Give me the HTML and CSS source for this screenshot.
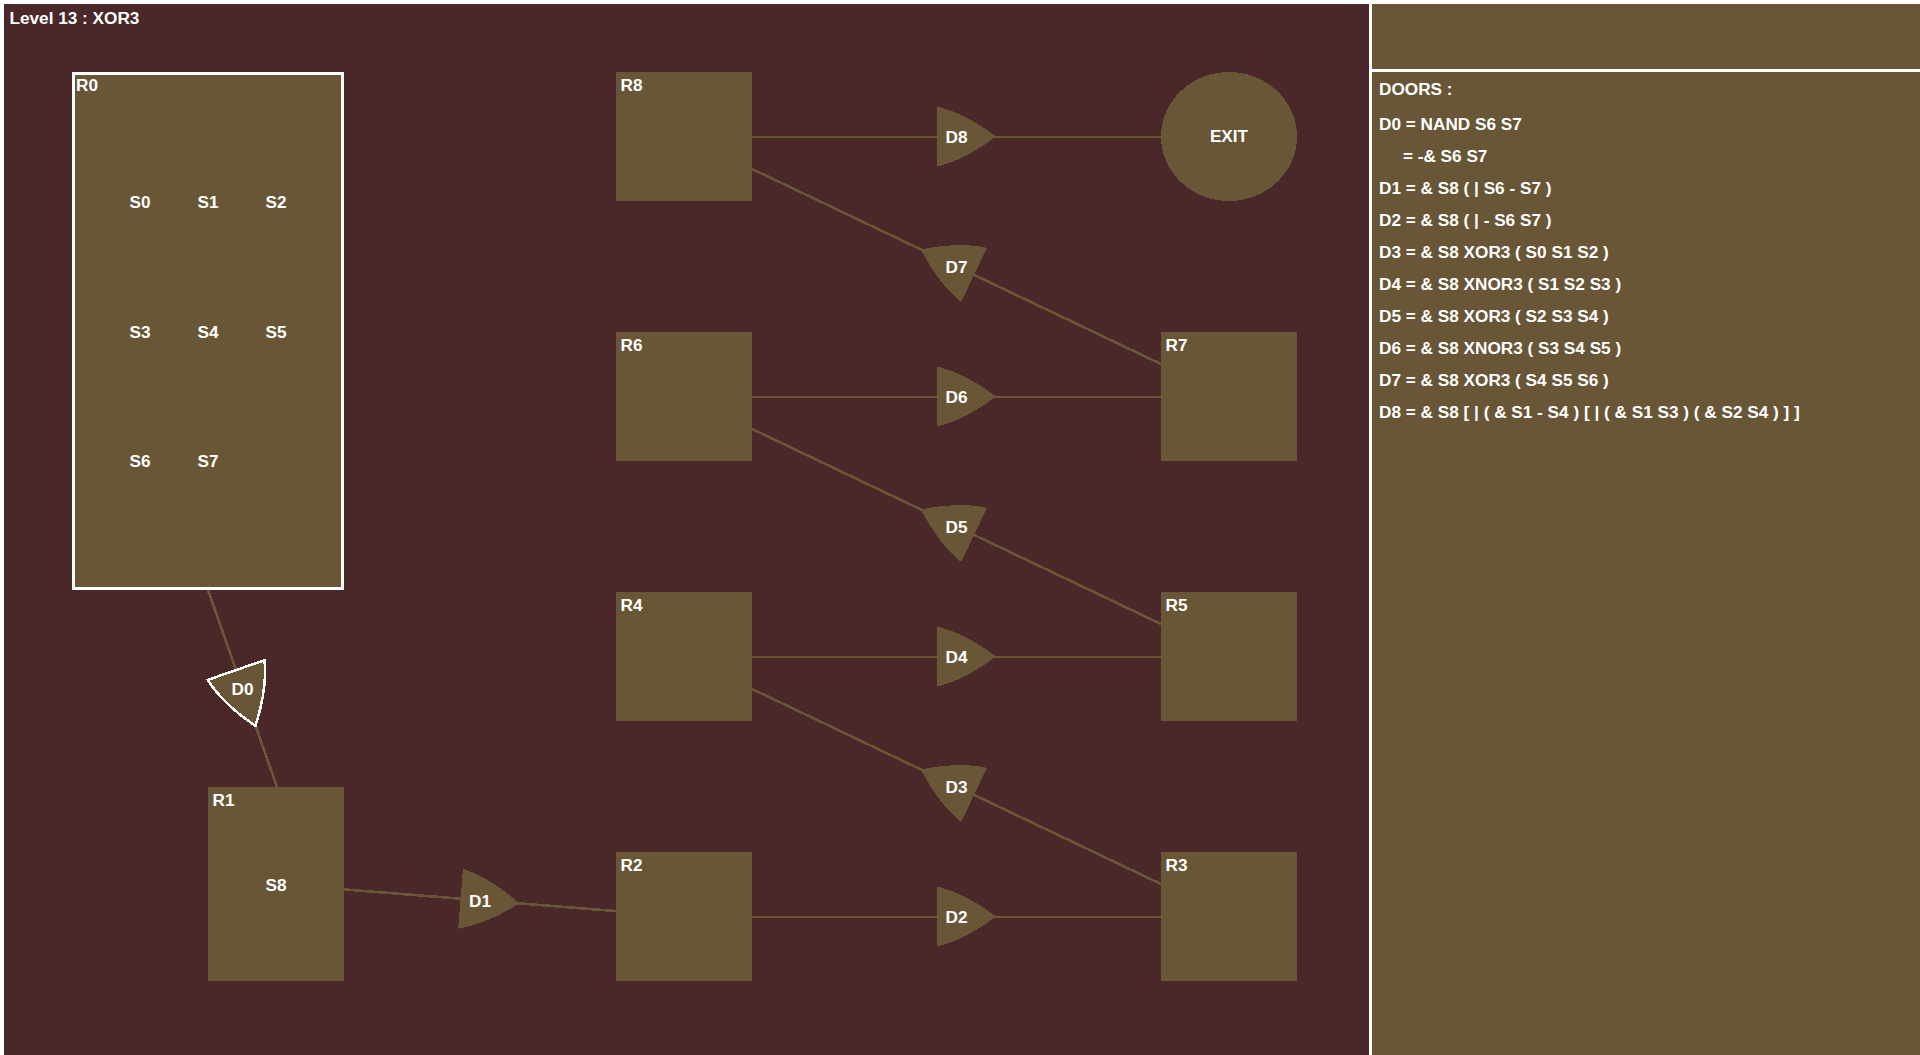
FILE: index.html
```html
<!DOCTYPE html>
<html lang="en">
<head>
    <meta charset="UTF-8">
    <title>Level 13 : XOR3</title>
    <link rel="stylesheet" href="styles.css">
</head>
<body>
    <div class="game">
        <svg class="board" viewBox="4 4 1365 1051" width="1365" height="1051" xmlns="http://www.w3.org/2000/svg">
            <defs>
                <path id="door" d="M-19.5,-30 Q7.5,-24 39.5,0 Q7.5,24 -19.5,30 Z"/>
            </defs>

            <text x="9.5" y="24">Level 13 : XOR3</text>

            <!-- corridors -->
            <g class="links">
                <line x1="208" y1="590" x2="277" y2="787"/>
                <line x1="276" y1="884" x2="684" y2="916.5"/>
                <line x1="684" y1="137" x2="1229" y2="137"/>
                <line x1="684" y1="136.5" x2="1229" y2="396.5"/>
                <line x1="684" y1="397" x2="1229" y2="397"/>
                <line x1="684" y1="396.5" x2="1229" y2="656.5"/>
                <line x1="684" y1="657" x2="1229" y2="657"/>
                <line x1="684" y1="656.5" x2="1229" y2="916.5"/>
                <line x1="684" y1="917" x2="1229" y2="917"/>
            </g>

            <!-- rooms -->
            <rect class="room sel" x="73.5" y="73.5" width="269" height="515"/>
            <text x="76" y="91">R0</text>
            <g class="mid">
                <text x="140" y="208">S0</text>
                <text x="208" y="208">S1</text>
                <text x="276" y="208">S2</text>
                <text x="140" y="337.5">S3</text>
                <text x="208" y="337.5">S4</text>
                <text x="276" y="337.5">S5</text>
                <text x="140" y="467">S6</text>
                <text x="208" y="467">S7</text>
            </g>

            <rect class="room" x="208" y="787" width="136" height="194"/>
            <text x="212.5" y="806">R1</text>
            <text class="mid" x="276" y="890.5">S8</text>

            <rect class="room" x="616" y="72" width="136" height="129"/>
            <text x="620.5" y="91">R8</text>
            <rect class="room" x="616" y="332" width="136" height="129"/>
            <text x="620.5" y="351">R6</text>
            <rect class="room" x="616" y="592" width="136" height="129"/>
            <text x="620.5" y="611">R4</text>
            <rect class="room" x="616" y="852" width="136" height="129"/>
            <text x="620.5" y="871">R2</text>

            <ellipse class="room" cx="1229" cy="136.5" rx="68" ry="64.5"/>
            <text class="mid" x="1229" y="142">EXIT</text>
            <rect class="room" x="1161" y="332" width="136" height="129"/>
            <text x="1165.5" y="351">R7</text>
            <rect class="room" x="1161" y="592" width="136" height="129"/>
            <text x="1165.5" y="611">R5</text>
            <rect class="room" x="1161" y="852" width="136" height="129"/>
            <text x="1165.5" y="871">R3</text>

            <!-- doors -->
            <use class="door sel" href="#door" transform="translate(242.5 688.5) rotate(70.9)"/>
            <use class="door" href="#door" transform="translate(480 900.25) rotate(4.55)"/>
            <use class="door" href="#door" transform="translate(956.5 136.5)"/>
            <use class="door" href="#door" transform="translate(956.5 266.5) rotate(205.5)"/>
            <use class="door" href="#door" transform="translate(956.5 396.5)"/>
            <use class="door" href="#door" transform="translate(956.5 526.5) rotate(205.5)"/>
            <use class="door" href="#door" transform="translate(956.5 656.5)"/>
            <use class="door" href="#door" transform="translate(956.5 786.5) rotate(205.5)"/>
            <use class="door" href="#door" transform="translate(956.5 916.5)"/>
            <g class="mid">
                <text x="242.5" y="695">D0</text>
                <text x="480" y="907">D1</text>
                <text x="956.5" y="143">D8</text>
                <text x="956.5" y="273">D7</text>
                <text x="956.5" y="403">D6</text>
                <text x="956.5" y="533">D5</text>
                <text x="956.5" y="663">D4</text>
                <text x="956.5" y="793">D3</text>
                <text x="956.5" y="923">D2</text>
            </g>
        </svg>

        <div class="side">
            <div class="status"></div>
            <div class="doors">
                <p class="title">DOORS :</p>
                <p>D0 = NAND S6 S7</p>
                <p>&nbsp;&nbsp;&nbsp;&nbsp;&nbsp;= -&amp; S6 S7</p>
                <p>D1 = &amp; S8 ( | S6 - S7 )</p>
                <p>D2 = &amp; S8 ( | - S6 S7 )</p>
                <p>D3 = &amp; S8 XOR3 ( S0 S1 S2 )</p>
                <p>D4 = &amp; S8 XNOR3 ( S1 S2 S3 )</p>
                <p>D5 = &amp; S8 XOR3 ( S2 S3 S4 )</p>
                <p>D6 = &amp; S8 XNOR3 ( S3 S4 S5 )</p>
                <p>D7 = &amp; S8 XOR3 ( S4 S5 S6 )</p>
                <p>D8 = &amp; S8 [ | ( &amp; S1 - S4 ) [ | ( &amp; S1 S3 ) ( &amp; S2 S4 ) ] ]</p>
            </div>
        </div>
    </div>
</body>
</html>
```

FILE: styles.css
```css
* {
    box-sizing: border-box;
    margin: 0;
    padding: 0;
}
html, body {
    height: 100%;
    overflow: hidden;
}
body {
    background: #fff;
    padding: 4px 0 0 4px;
    color: #fff;
    font-family: "Liberation Sans", Arial, sans-serif;
    font-weight: bold;
    font-size: 17.2px;
}
.game {
    display: flex;
    gap: 3px;
    height: 100%;
}
.board {
    flex: none;
    display: block;
    width: 1365px;
    height: 1051px;
    background: #4a2729;
}
.board text {
    fill: #fff;
    font-family: "Liberation Sans", Arial, sans-serif;
    font-weight: bold;
    font-size: 17.2px;
}
.board .mid text, .board text.mid {
    text-anchor: middle;
}
.links line {
    stroke: #685637;
    stroke-width: 2.6;
    shape-rendering: crispEdges;
}
.room, .door {
    fill: #685637;
    shape-rendering: crispEdges;
}
.room.sel {
    stroke: #fff;
    stroke-width: 3;
}
.door.sel {
    stroke: #fff;
    stroke-width: 2.5;
}
.side {
    flex: 1;
    display: flex;
    flex-direction: column;
    gap: 3px;
}
.status {
    height: 65px;
    background: #685637;
}
.doors {
    flex: 1;
    background: #685637;
    padding: 1px 7px 0;
    line-height: 32px;
    white-space: nowrap;
}
.doors .title {
    margin-bottom: 3px;
}
```
